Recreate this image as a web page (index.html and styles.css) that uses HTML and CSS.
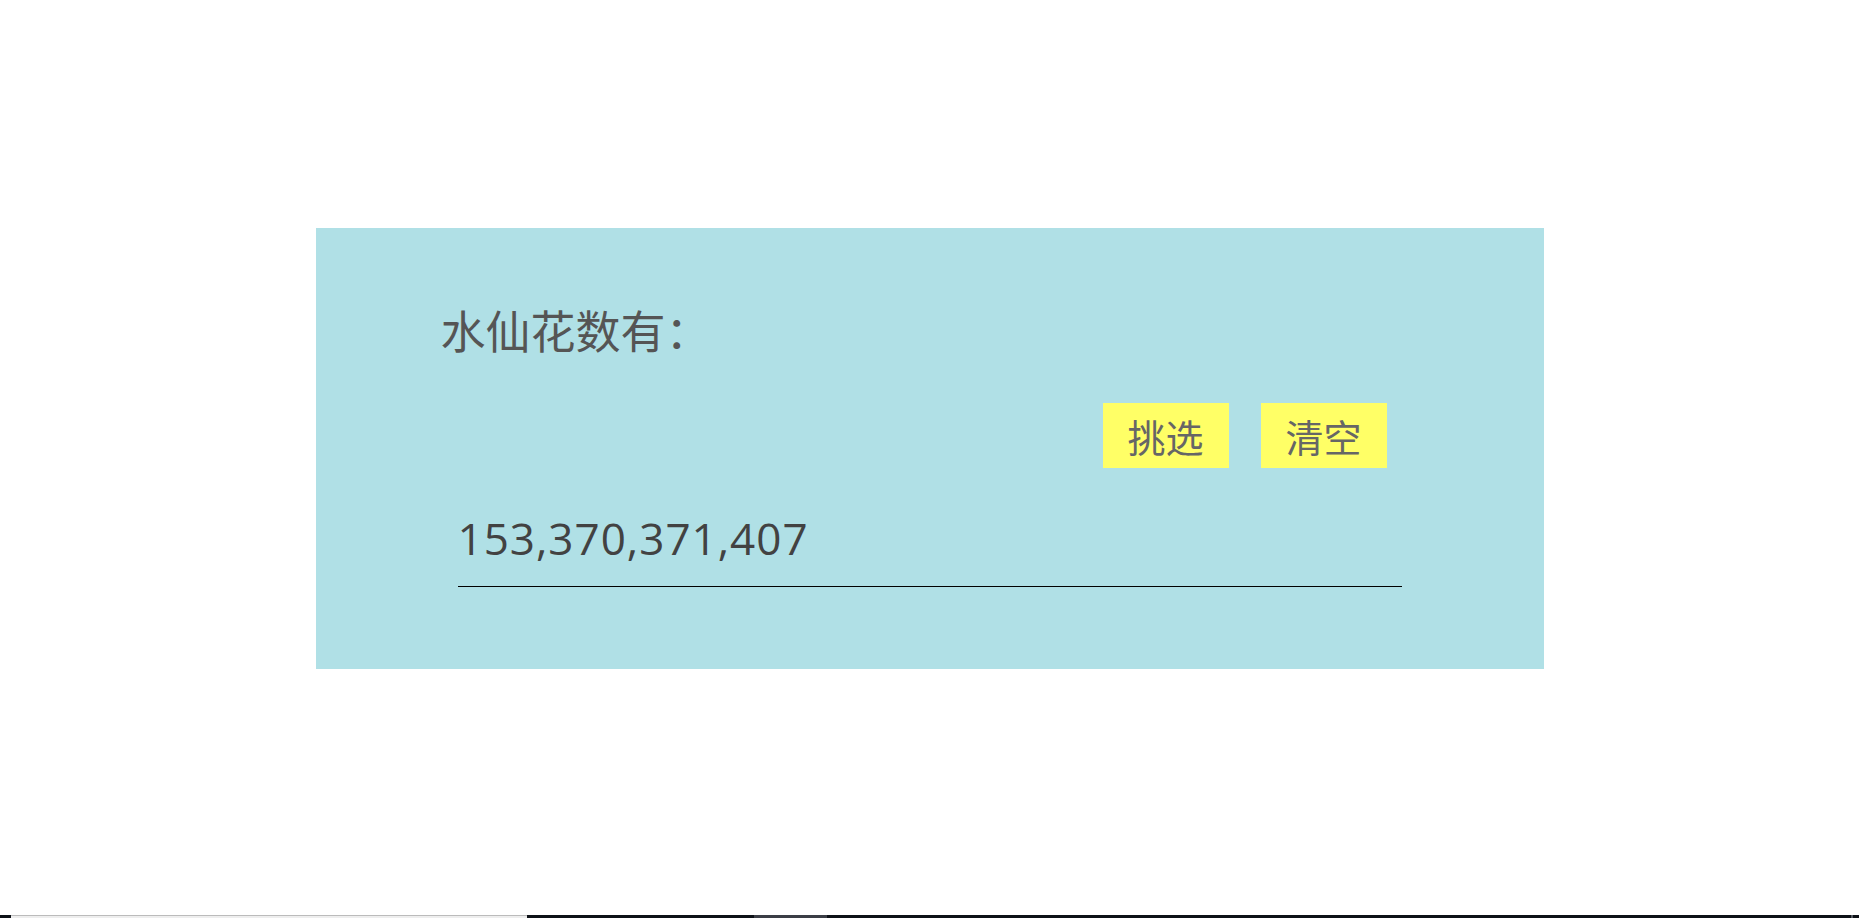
FILE: index.html
```html
<!DOCTYPE html>
<html lang="zh-CN">
<head>
<meta charset="utf-8">
<title>水仙花数</title>
<link rel="stylesheet" href="styles.css">
</head>
<body>
<div class="page">
  <main class="panel">
    <h1 class="title">水仙花数有：</h1>
    <div class="actions">
      <button class="btn" type="button">挑选</button>
      <button class="btn" type="button">清空</button>
    </div>
    <input class="result" type="text" value="153,370,371,407">
  </main>
  <div class="spacer"></div>
  <div class="strip">
    <span class="seg seg-black"></span>
    <span class="seg seg-light"></span>
    <span class="seg seg-dark1"></span>
    <span class="seg seg-thumb"></span>
    <span class="seg seg-dark2"></span>
    <span class="seg seg-tip"></span>
    <span class="seg seg-end"></span>
  </div>
</div>
</body>
</html>
```
FILE: styles.css
```css
html, body {
  margin: 0;
  padding: 0;
  background: #fff;
}
.page {
  height: 100vh;
  display: flex;
  flex-direction: column;
  font-family: "Noto Sans CJK SC", "Noto Sans", sans-serif;
}
.panel {
  box-sizing: border-box;
  width: 1228px;
  height: 441px;
  margin: 228px auto 0;
  background: #b0e0e6;
  display: flex;
  flex-direction: column;
}
.title {
  margin: 79px 0 0 125px;
  font-size: 45px;
  line-height: 45px;
  font-weight: normal;
  color: #555;
}
.actions {
  display: flex;
  justify-content: flex-end;
  gap: 32px;
  margin-top: 51px;
  padding-right: 157px;
}
.btn {
  width: 126px;
  height: 65px;
  border: none;
  padding: 0;
  background: #ffff66;
  color: #666;
  font-family: "Noto Sans CJK SC", sans-serif;
  font-size: 38px;
  line-height: 65px;
}
.result {
  box-sizing: border-box;
  display: block;
  width: 944px;
  height: 80px;
  margin: 39px auto 0;
  padding: 0 0 18px 0;
  border: none;
  border-bottom: 1px solid #000;
  background: transparent;
  outline: none;
  font-family: "Open Sans", "Noto Sans", sans-serif;
  font-size: 44px;
  letter-spacing: 1px;
  color: #424242;
}
.spacer {
  flex: 1;
}
.strip {
  display: flex;
  height: 3px;
}
.seg { display: block; height: 3px; }
.seg-black { width: 11px; background: #0d1117; }
.seg-light { width: 516px; background: #eeeeee; border-top: 1px solid #bbbbbb; box-sizing: border-box; }
.seg-dark1 { width: 227px; background: #0d1117; }
.seg-thumb { width: 73px; background: #3b3e46; }
.seg-dark2 { flex: 1; background: #0d1117; }
.seg-tip { width: 2px; background: #555a62; }
.seg-end { width: 6px; background: #0d1117; }
```
